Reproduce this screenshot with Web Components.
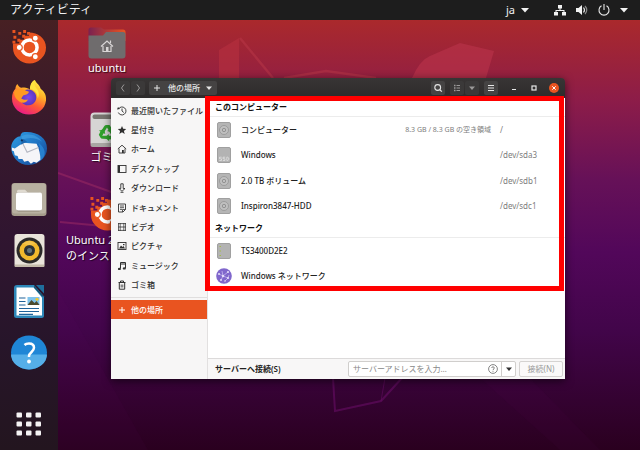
<!DOCTYPE html>
<html lang="ja">
<head>
<meta charset="utf-8">
<title>他の場所</title>
<style>
  html, body { margin: 0; height: 100%; }
  body { font-family: "Noto Sans", "Noto Sans CJK JP", sans-serif; background: #2c001e; overflow: hidden; }
</style>
</head>
<body>
<ubuntu-desktop></ubuntu-desktop>

<script>
const ICONS = {
  installer: ['0 0 36 36', `<path d="M18 3.500c9 0 17.500 6 17.500 15.500A17 16.500 0 0 1 1.500 19V15H8V11h5V7h5Z" fill="#e95420"/>
    <g fill="#e95420"><path d="M1 1h3v3H1zM7 3h3v3H7zM12 1h3v3h-3zM2 7h3v3H2zM6 10h3v3H6zM11 6h3v3h-3zM16 3h3v3h-3zM1 12h3v3H1z"/></g>
    <circle cx="18.500" cy="19" r="7.800" fill="none" stroke="#fff" stroke-width="3.600"/>
    <g fill="#fff" stroke="#e95420" stroke-width="1.200"><circle cx="8" cy="19" r="3.100"/><circle cx="24.500" cy="9.500" r="3.100"/><circle cx="24.500" cy="28.500" r="3.100"/></g>`],
  firefox: ['0 0 36 36', `<defs><linearGradient id="f1" x1=".8" y1="0" x2=".3" y2="1"><stop offset="0" stop-color="#fff04a"/><stop offset=".35" stop-color="#ffb428"/><stop offset=".65" stop-color="#ff5a35"/><stop offset="1" stop-color="#e8188a"/></linearGradient>
    <radialGradient id="f2"><stop offset="0" stop-color="#7a4bea"/><stop offset="1" stop-color="#5b36c0"/></radialGradient></defs>
    <path d="M24 0c2 4 5 5 6 9 4 3 6 7 5.500 12C34.500 30 27 35.500 18 35.500S.5 29 .5 19C.5 14 2 11 4 9c0-2 1-4 2-5 1 2 2 3 4 4 4-1 7 0 9 2 1-4 1-8 5-10Z" fill="url(#f1)"/>
    <path d="M10 13c4-5 12-4 14.500 1 3 6-1 12-7 12-7 0-10-6-7.500-13Z" fill="url(#f2)"/>
    <path d="M3 11c4-2 9-2 12 0l3 1c-1 3-4 3-6 4l-2 3c2 1 4 2 7 1-2 4-6 4-9 2-4-3-6-6-5-11Z" fill="#ff9a22"/>
    <path d="M19 9c5 1 8 5 8 10 2-4 1-8-1-10-2-3-3-4-2-9-4 2-5 6-5 9Z" fill="#ffe33f"/>`],
  thunderbird: ['0 0 38 36', `<defs><linearGradient id="t1" x1="0" y1="0" x2="1" y2="1"><stop offset="0" stop-color="#2f9fe4"/><stop offset=".5" stop-color="#1f74c4"/><stop offset="1" stop-color="#173f8c"/></linearGradient></defs>
    <path d="M12 1C26-1 38 6 38 18c0 9-8 17-19 17.500-6 0-10-2-13-5-5-5-8-14-4-20 2-3 4-5 8-5.500 0-2 1-3 2-4Z" fill="url(#t1)"/>
    <path d="M26 32c5-6 6-13 3-20 5 4 8 9 6 14-2 4-5 6-9 6Z" fill="#2b8ad8" opacity=".8"/>
    <path d="M11 5C19 1 28 4 33 11 26 6 18 6 12 9Z" fill="#4aa8e6" opacity=".55"/>
    <path d="m1 17 3 1 9-6 14 1q4 8 4 17l-4 3-3-1-3 2-3-3-4 1-2-3-4 0-1-3-3-1-1-4-2-1Z" fill="#f5f5f8"/>
    <path d="m12 12 5 10 12-5" fill="none" stroke="#b4b7c2" stroke-width="1.200"/>
    <path d="m10 14 3-6 4 3Z" fill="#1c66ae"/><circle cx="11.500" cy="9.500" r="1.200" fill="#12305a"/>`],
  files: ['0 0 36 34', `<rect x=".5" y=".5" width="35" height="33" rx="3" fill="#a59c8b"/><rect x="1" y="1" width="34" height="30" rx="3" fill="#b8b1a1"/>
    <path d="M6 28V9q0-2 2-2h6l3 3h11q2 0 2 2v15q0 2-2 2H8q-2 0-2-1Z" fill="#8d8576"/><path d="M6 27V8.500Q6 7 7.500 7H14l3 3H6Z" fill="#dfdad0"/><rect x="5" y="10" width="26" height="18" rx="2" fill="#fff"/>`],
  music_app: ['0 0 36 34', `<rect x="3.500" y=".5" width="30" height="33" rx="3" fill="#e9e4da"/><rect x="3.500" y="31" width="30" height="2.500" rx="1" fill="#c3bba9"/>
    <circle cx="18.500" cy="17" r="13" fill="#2b2a29"/><circle cx="18.500" cy="17" r="10" fill="#f2b92d"/><circle cx="18.500" cy="17" r="5.500" fill="#2b3136"/><circle cx="18.500" cy="17" r="2.500" fill="#61737b"/><path d="M11 10 18 7l7 3-6.500 2Z" fill="#fff" opacity=".15"/>`],
  writer: ['0 0 36 34', `<path d="M6 .5h17L33 12v19q0 2.500-2.500 2.500h-25Q3 33.500 3 31V3.500Q3 .5 6 .5Z" fill="#2d87b8"/><path d="M5.500 3h17L31 13v18H5.500Z" fill="#fff"/><path d="M25 .5h8V9Z" fill="#1f6f9c"/><path d="M23 1v2l8 9h2Z" fill="#17506f"/>
    <path d="M8 13.500h6.500M8 17h6.500M8 20.500h6.500M8 24h20M8 27h20M8 29.800h14" stroke="#1f639a" stroke-width="1.200"/><rect x="16.500" y="12.500" width="12" height="8" fill="#7ec3ec"/><path d="m16.500 20.500 4-5 3 3 2-2 3 4Z" fill="#4b4a2f"/><circle cx="26" cy="14.800" r="1.500" fill="#f2c82d"/>`],
  help_app: ['0 0 36 34', `<ellipse cx="18" cy="17" rx="18" ry="17" fill="#1f86d6"/><path d="M0 19h36A18 15 0 0 1 0 19Z" fill="#55aee8"/>
    <path d="M13.500 9.500q1.500-1.500 4.500-1.500 5 0 5 4.300c0 4-5 4.700-5 8.200v1" fill="none" stroke="#fff" stroke-width="2.500"/><circle cx="18" cy="26" r="1.900" fill="#fff"/>`],
  apps: ['0 0 36 34', `<g fill="#f5f3f4"><rect x="5.500" y="5" width="5.500" height="5" rx="1"/><rect x="15" y="5" width="5.500" height="5" rx="1"/><rect x="24.500" y="5" width="5.500" height="5" rx="1"/><rect x="5.500" y="14" width="5.500" height="5" rx="1"/><rect x="15" y="14" width="5.500" height="5" rx="1"/><rect x="24.500" y="14" width="5.500" height="5" rx="1"/><rect x="5.500" y="23" width="5.500" height="5" rx="1"/><rect x="15" y="23" width="5.500" height="5" rx="1"/><rect x="24.500" y="23" width="5.500" height="5" rx="1"/></g>`],
  home_folder: ['0 0 38 32', `<defs><linearGradient id="h1"><stop offset="0" stop-color="#7a2150"/><stop offset="1" stop-color="#e95420"/></linearGradient></defs>
    <path d="M.5 14V3Q.5 .5 3 .5h10l3 2h19q2.500 0 2.500 2.500v9Z" fill="url(#h1)"/><path d="M.5 28.500V8.500H15l3-3.500h17q2.500 0 2.500 2.500v21q0 3-3 3h-31q-3 0-3-3Z" fill="#6f6c6d"/>
    <path d="m13 19.500 6-5.500 6 5.500M15 19v5.500h8V19M22.500 16v-2.500" fill="none" stroke="#d9d6d6" stroke-width="1.200"/><rect x="18" y="20" width="2.500" height="4.500" fill="#d9d6d6"/>`],
  trash_desk: ['0 0 34 36', `<rect x=".5" y=".5" width="33" height="34" rx="4" fill="#d6d5d4"/><rect x="2.500" y="2.500" width="29" height="4.500" rx="2" fill="#77756f"/><rect x=".5" y="31" width="33" height="4" rx="2" fill="#a9a7a4"/>
    <g fill="#2fa02b"><path id="arm" d="m11.500 18.500 2.700-4.200q.8-1.300 2.300-1.300h3l2 3 1.500-1-1 5.500-5-1.500 1.500-1-1.500-2.500-2.700 4.500Z"/><use href="#arm" transform="rotate(120 17 21)"/><use href="#arm" transform="rotate(240 17 21)"/></g>`],
  network: ['0 0 12 12', `<path d="M4 1h4v3.500H4zM0 8h4v3.500H0zM8 8h4v3.500H8zM5.500 4h1v2.500h-1zM1.500 6h9v1h-9zM1.500 6h1v3h-1zM9.500 6h1v3h-1z" fill="#f2f2f2"/>`],
  volume: ['0 0 12 12', `<path d="M0 4h2.500L6 1v10L2.500 8H0Z" fill="#f2f2f2"/><path d="M7.500 3.500q2 2.500 0 5" fill="none" stroke="#e5e5e5" stroke-width="1.200"/><path d="M9 2q3.500 4 0 8" fill="none" stroke="#8a8a8a" stroke-width="1.200"/>`],
  power: ['0 0 12 12', `<path d="M3.500 1.800a5 5 0 1 0 5 0M6 0v6" fill="none" stroke="#e8e8e8" stroke-width="1.100"/>`],
  down: ['0 0 8 8', `<path d="M0 2h8L4 6.500Z" fill="currentColor"/>`],
  left: ['0 0 10 10', `<path d="M6 1.500 3.500 5 6 8.500" fill="none" stroke="currentColor"/>`],
  right: ['0 0 10 10', `<path d="M4 1.500 6.500 5 4 8.500" fill="none" stroke="currentColor"/>`],
  plus: ['0 0 10 10', `<path d="M5 2v6M2 5h6" stroke="currentColor" fill="none"/>`],
  search: ['0 0 10 10', `<circle cx="4.700" cy="4.500" r="2.900" fill="none" stroke="currentColor" stroke-width="1.100"/><path d="m6.800 6.600 2 2" stroke="currentColor" stroke-width="1.300"/>`],
  list: ['0 0 10 10', `<path d="M4.500 2.500H8M4.500 5H8M4.500 7.500H8" stroke="currentColor"/><path d="M2 1.700h1.500v1.500H2zM2 4.200h1.500v1.500H2zM2 6.700h1.500v1.500H2z" fill="currentColor"/>`],
  menu: ['0 0 10 10', `<path d="M2 2.500h6M2 5h6M2 7.500h6" stroke="currentColor"/>`],
  min: ['0 0 10 10', `<path d="M3 6.500h4" stroke="currentColor"/>`],
  max: ['0 0 10 10', `<rect x="3" y="3" width="4" height="4" fill="none" stroke="currentColor" stroke-width="1.200"/>`],
  close: ['0 0 10 10', `<circle cx="5" cy="5" r="5" fill="#e95420"/><path d="m3.300 3.300 3.400 3.400m0-3.400L3.300 6.700" stroke="#fff" stroke-width="1"/>`],
  recent: ['0 0 10 10', `<path d="M1.500 3A4 4 0 1 1 1.300 6.500" fill="none" stroke="currentColor" stroke-width=".9"/><path d="M0 3.500 1 1l2 2Z" fill="currentColor"/><path d="M5 2.500V5l1.800 1.500" fill="none" stroke="currentColor" stroke-width=".9"/>`],
  star: ['0 0 10 10', `<path d="m5 1 1.200 2.800 3 .2-2.300 1.900.8 3L5 7.300 2.300 8.900l.8-3L.8 4l3-.2Z" fill="#2f2f2f"/>`],
  home: ['0 0 10 10', `<path d="M.8 5 5 1.200 9.200 5M2 4.500V9h6V4.500" fill="none" stroke="currentColor" stroke-width=".9"/><path d="M5 6h1.800v3H5z" fill="currentColor"/>`],
  desktop: ['0 0 10 10', `<rect x="1" y="1.500" width="8" height="7" fill="none" stroke="currentColor" stroke-width=".9"/><path d="M1 1.500h2v7H1z" fill="currentColor"/>`],
  download: ['0 0 10 10', `<path d="M3.800.8h2.400v4.700H8L5 8.300 2 5.500h1.800ZM3.500 9.300h3" fill="none" stroke="currentColor" stroke-width=".9"/>`],
  document: ['0 0 10 10', `<path d="M1.500 1h7v5.500L6 9H1.500Z" fill="none" stroke="currentColor" stroke-width=".9"/><path d="M3 3h4M3 4.700h4M3 6.400h2M5.500 9V6.500h3" stroke="currentColor" stroke-width=".8" fill="none"/>`],
  video: ['0 0 10 10', `<path d="M1.500 1v8M8.500 1v8M3.200 1v8M6.800 1v8" stroke="currentColor" stroke-width=".7"/><path d="M1.200 1.600h7.600M1.200 5h7.600M1.200 8.400h7.600" stroke="currentColor" stroke-width=".8"/>`],
  picture: ['0 0 10 10', `<rect x="1" y="1.500" width="8" height="7" fill="none" stroke="currentColor" stroke-width=".9"/><path d="m2 7.500 2-3 1.500 1.500 1-1L8 7.500ZM6 3h1.500v1.300H6z" fill="currentColor"/>`],
  music: ['0 0 10 10', `<path d="M3.500 7.500v-6H8.500v5.500M3.500 3h5" fill="none" stroke="currentColor"/><ellipse cx="2.400" cy="7.900" rx="1.500" ry="1.200" fill="currentColor"/><ellipse cx="7.300" cy="7.400" rx="1.500" ry="1.200" fill="currentColor"/>`],
  trash: ['0 0 10 10', `<path d="M1.500 2.500h7M3.500 2.300V1h3v1.300M2.300 3v6.200h5.400V3" fill="none" stroke="currentColor"/><path d="M4.200 4.500v3M5.800 4.500v3" stroke="currentColor" stroke-width=".8"/>`],
  help: ['0 0 10 10', `<circle cx="5" cy="5" r="4.400" fill="none" stroke="currentColor" stroke-width=".9"/><path d="M3.700 4Q3.800 2.800 5 2.800T6.300 4C6.300 5 5 5 5 6.100M5 6.900v.9" fill="none" stroke="currentColor" stroke-width=".9"/>`],
  hdd: ['0 0 14 16', `<rect x=".5" y=".5" width="13" height="15" rx="1.500" fill="#b5b5b5" stroke="#a0a0a0"/><circle cx="7" cy="8" r="4.500" fill="#c0c0c0" stroke="#949494" stroke-width=".8"/><circle cx="7" cy="8" r="1.700" fill="none" stroke="#8c8c8c" stroke-width=".9"/>`],
  ssd: ['0 0 14 16', `<rect x=".5" y=".5" width="13" height="15" rx="1.500" fill="#b3b3b3" stroke="#a0a0a0"/><path d="M4.700 10.200H2.500v1.600h2v1.700H2.300M8.200 10.200H6v1.600h2v1.700H5.800M9.800 10.200v3.300h1l1-.9v-1.500l-1-.9Z" fill="none" stroke="#e8e8e8" stroke-width=".7"/>`],
  server: ['0 0 14 16', `<rect x=".5" y=".5" width="13" height="15" rx="1.500" fill="#b3b3b3" stroke="#a0a0a0"/><path d="M2.500 3.500h1.500M2.500 8h1.500M2.500 12.500h1.500" stroke="#a3bb4a"/>`],
  globe: ['0 0 16 16', `<circle cx="8" cy="8" r="7.800" fill="#8067cc"/><path d="m3 6 4 2 5-4M7 8l-2 4M7 8l5 2 1-3M12 10l-3 3M7 8 6 3" fill="none" stroke="#cfc3f2" stroke-width=".7"/><g fill="#e6defa"><circle cx="3" cy="6" r="1"/><circle cx="7" cy="8" r="1.200"/><circle cx="12" cy="4" r="1"/><circle cx="5" cy="12" r="1"/><circle cx="12" cy="10" r="1.100"/><circle cx="9" cy="13" r=".8"/></g>`]
};

function define(name, html, setup) {
  const template = document.createElement('template');
  template.innerHTML = html;
  customElements.define(name, class extends HTMLElement {
    constructor() {
      super();
      this.attachShadow({ mode: 'open' });
    }
    connectedCallback() {
      if (this.shadowRoot.childNodes.length) return;
      this.shadowRoot.append(template.content.cloneNode(true));
      if (setup) setup(this, this.shadowRoot);
    }
  });
}

define('ui-icon', `<style>
  :host { display: block; flex: none; width: var(--w, 10px); height: var(--h, 10px); }
  svg { display: block; width: 100%; height: 100%; }
</style>`, (host, root) => {
  const [box, body] = ICONS[host.getAttribute('name')];
  root.innerHTML += `<svg viewBox="${box}" aria-hidden="true">${body}</svg>`;
});

define('top-bar', `<style>
  :host { display: flex; align-items: center; justify-content: space-between; height: 20px; padding: 0 12px 0 10px; background: #1d1d1d; color: #f2f2f2; }
  button { all: unset; display: flex; align-items: center; font-size: 12px; line-height: 20px; }
  .lang { gap: 6px; font-size: 11px; }
  .right { display: flex; align-items: center; gap: 25px; }
  .status { gap: 10px; }
  ui-icon { --w: 12px; --h: 12px; }
  ui-icon[name=down] { --w: 8px; --h: 8px; }
</style>
<button>アクティビティ</button>
<div class="right">
  <button class="lang">ja <ui-icon name="down"></ui-icon></button>
  <button class="status" aria-label="システム"><ui-icon name="network"></ui-icon><ui-icon name="volume"></ui-icon><ui-icon name="power"></ui-icon><ui-icon name="down"></ui-icon></button>
</div>`);

define('dock-item', `<style>
  :host { display: block; }
  button { all: unset; display: block; }
  ui-icon { --w: 36px; --h: 35px; }
</style><button></button>`, (host, root) => {
  const button = root.querySelector('button');
  button.innerHTML = `<ui-icon name="${host.getAttribute('icon')}"></ui-icon>`;
  button.setAttribute('aria-label', host.getAttribute('label'));
});

define('app-dock', `<style>
  :host { display: flex; flex-direction: column; align-items: center; gap: 16px; box-sizing: border-box; width: 58px; padding: 9px 0 8px; background: linear-gradient(#472023, #38192c 25%, #301530 50%, #27152a 75%, #23151f); }
  .apps { margin-top: auto; }
</style>
<dock-item icon="installer" label="インストーラー"></dock-item>
<dock-item icon="firefox" label="Firefox"></dock-item>
<dock-item icon="thunderbird" label="Thunderbird"></dock-item>
<dock-item icon="files" label="ファイル"></dock-item>
<dock-item icon="music_app" label="Rhythmbox"></dock-item>
<dock-item icon="writer" label="Writer"></dock-item>
<dock-item icon="help_app" label="ヘルプ"></dock-item>
<dock-item class="apps" icon="apps" label="アプリケーションを表示する"></dock-item>`);

define('wall-paper', `<style>
  :host { display: block; background: linear-gradient(#aa292c, #8c1c49 19%, #661158 37%, #52075a 54%, #42054a 72%, #2a001f); }
  svg { display: block; width: 100%; height: 100%; }
</style>
<svg viewBox="58 20 582 430" preserveAspectRatio="xMidYMid slice" aria-hidden="true">
  <path d="M219 78V50l20-12v40Z" fill="#b83040" opacity=".6"/>
  <path d="m240 38 33 40M284 78l42-7 50 7" fill="none" stroke="#b93748" stroke-width="2.500" opacity=".5"/>
  <path d="M412 78q8-18 18-22l30-13 34 8-8 27Z" fill="#b83349" opacity=".65"/>
  <path d="m58 173 56 20M60 222l54 5" stroke="#a02c63" stroke-width="2" opacity=".5"/>
  <path d="m333 378 2 33 46-10 21-23" fill="none" stroke="#6b0e69" stroke-width="2" opacity=".55"/>
  <path d="m385 378-4 23" stroke="#6b0e69" opacity=".5"/>
  <path d="m58 290 90 160H58ZM480 378l80 72h40l-70-72Z" fill="#70106c" opacity=".05"/>
</svg>`);

define('desk-icon', `<style>
  :host { display: flex; flex-direction: column; align-items: center; gap: 1px; box-sizing: border-box; width: 98px; color: #fff; font-size: 11px; line-height: 16px; text-align: center; white-space: nowrap; text-shadow: 1px 1px 1px #000a; }
  :host([clipped]) span { align-self: start; padding-left: 8px; text-align: left; }
</style><slot name="icon"></slot><span><slot></slot></span>`);

define('nav-item', `<style>
  :host { display: grid; }
  button { all: unset; display: flex; align-items: center; gap: 4px; padding-left: 6px; font-size: 8px; line-height: 12px; font-weight: 500; color: #303030; white-space: nowrap; }
  :host([selected]) button { background: #e95420; color: #fff; }
</style><button></button>`, (host, root) => {
  root.querySelector('button').innerHTML = `<ui-icon name="${host.getAttribute('icon')}"></ui-icon><slot></slot>`;
});

define('side-bar', `<style>
  :host { display: block; padding-top: 3px; background: #f7f6f6; border-right: 1px solid #e2e0e0; }
  .list { display: grid; grid-auto-rows: 1fr; height: 194px; }
  .other { display: grid; grid-template-rows: 19px; margin-top: 2px; padding-top: 2px; border-top: 1px solid #e0dede; }
</style>
<nav>
<div class="list">
<nav-item icon="recent">最近開いたファイル</nav-item>
<nav-item icon="star">星付き</nav-item>
<nav-item icon="home">ホーム</nav-item>
<nav-item icon="desktop">デスクトップ</nav-item>
<nav-item icon="download">ダウンロード</nav-item>
<nav-item icon="document">ドキュメント</nav-item>
<nav-item icon="video">ビデオ</nav-item>
<nav-item icon="picture">ピクチャ</nav-item>
<nav-item icon="music">ミュージック</nav-item>
<nav-item icon="trash">ゴミ箱</nav-item>
</div>
<div class="other"><nav-item icon="plus" selected>他の場所</nav-item></div>
</nav>`);

define('header-bar', `<style>
  :host { display: flex; align-items: center; height: 20px; padding: 0 4px 0 5px; background: linear-gradient(#383535, #2d2b2b); border-radius: 4px 4px 0 0; color: #e6e6e6; }
  button { all: unset; display: flex; align-items: center; justify-content: center; box-sizing: border-box; min-width: 14px; height: 14px; border-radius: 2px; background: #454343; font-size: 8px; line-height: 12px; font-weight: 500; }
  .pair { display: flex; gap: 1px; color: #9b9999; }
  .pair button { background: #3b3939; }
  .path { gap: 6px; margin-left: 4px; padding: 0 5px 0 3px; }
  .tools { display: flex; gap: 5px; margin-left: auto; }
  .wm { display: flex; gap: 6px; margin-left: 9px; }
  .wm button { background: none; }
  .path ui-icon[name=down], .pair ui-icon[name=down] { --w: 6px; --h: 6px; }
</style>
<div class="pair"><button aria-label="戻る"><ui-icon name="left"></ui-icon></button><button aria-label="進む"><ui-icon name="right"></ui-icon></button></div>
<button class="path"><ui-icon name="plus"></ui-icon>他の場所<ui-icon name="down"></ui-icon></button>
<div class="tools">
  <button aria-label="検索"><ui-icon name="search"></ui-icon></button>
  <div class="pair"><button aria-label="表示形式"><ui-icon name="list"></ui-icon></button><button aria-label="表示設定"><ui-icon name="down"></ui-icon></button></div>
  <button aria-label="メニュー"><ui-icon name="menu"></ui-icon></button>
</div>
<div class="wm"><button aria-label="最小化"><ui-icon name="min"></ui-icon></button><button aria-label="最大化"><ui-icon name="max"></ui-icon></button><button aria-label="閉じる"><ui-icon name="close"></ui-icon></button></div>`);

define('place-row', `<style>
  :host { display: flex; align-items: center; padding-left: 8px; font-size: 8px; line-height: 12px; color: #222; white-space: nowrap; }
  .icon { display: grid; place-items: center; width: 16px; margin-right: 9px; --w: 14px; --h: 16px; }
  .globe { --w: 16px; }
  .name { flex: 1; font-weight: 500; }
  .free, .mount { color: #7d7d7d; }
  .free { font-size: 7px; padding-right: 9px; }
  .mount { width: 65px; }
</style><span class="icon"></span><span class="name"><slot></slot></span><span class="free"><slot name="free"></slot></span><span class="mount"><slot name="mount"></slot></span>`, (host, root) => {
  const box = root.querySelector('.icon'), name = host.getAttribute('icon');
  box.classList.add(name);
  box.innerHTML = `<ui-icon name="${name}"></ui-icon>`;
});

define('place-group', `<style>
  :host { display: block; }
  h2 { margin: 0; padding-left: 7px; font-size: 8px; line-height: 18px; font-weight: 700; color: #111; border-bottom: 1px solid #ececec; }
  .rows { display: grid; grid-auto-rows: 1fr; height: var(--rows); }
</style><h2><slot name="title"></slot></h2><div class="rows"><slot></slot></div>`);

define('highlight-frame', `<style>
  :host { display: block; position: relative; }
  .frame { position: absolute; inset: -2px 1px -2px -3px; border: 5px solid #f00; pointer-events: none; }
</style><slot></slot><div class="frame"></div>`);

define('connect-bar', `<style>
  :host { display: flex; align-items: center; height: 20px; padding: 0 2px 0 7px; border-top: 1px solid #dcdada; background: #f8f7f7; font-size: 8px; line-height: 12px; color: #222; }
  label { flex: 1; font-weight: 600; }
  .field { display: flex; align-items: center; box-sizing: border-box; height: 16px; width: 168px; border: 1px solid #d0cecc; border-radius: 2px; background: #fff; color: #777; }
  input { all: unset; flex: 1; min-width: 0; padding-left: 4px; font: inherit; }
  input::placeholder { color: #888; opacity: 1; }
  button { all: unset; display: grid; place-items: center; box-sizing: border-box; }
  .drop { width: 14px; height: 14px; margin-left: 3px; border-left: 1px solid #d0cecc; color: #333; }
  .drop ui-icon { --w: 6px; --h: 6px; }
  .go { height: 16px; width: 44px; margin-left: 3px; border: 1px solid #d5d3d1; border-radius: 2px; color: #999; background: #faf9f9; }
</style>
<label for="addr">サーバーへ接続(S)</label>
<div class="field"><input id="addr" type="text" placeholder="サーバーアドレスを入力…"><button aria-label="ヘルプ"><ui-icon name="help"></ui-icon></button><button class="drop" aria-label="履歴"><ui-icon name="down"></ui-icon></button></div>
<button class="go">接続(N)</button>`);

define('files-window', `<style>
  :host { display: block; border-radius: 4px 4px 0 0; box-shadow: 0 2px 8px #0009; }
  .body { display: grid; grid-template-columns: 97px 1fr; }
  .pane { display: flex; flex-direction: column; min-height: 281px; background: #fff; }
  .local { --rows: 102px; }
  .net { --rows: 51px; }
  connect-bar { margin-top: auto; }
</style>
<header-bar></header-bar>
<div class="body">
  <side-bar></side-bar>
  <div class="pane">
    <highlight-frame>
      <place-group class="local"><span slot="title">このコンピューター</span>
        <place-row icon="hdd">コンピューター<span slot="free">8.3 GB / 8.3 GB の空き領域</span><span slot="mount">/</span></place-row>
        <place-row icon="ssd">Windows<span slot="mount">/dev/sda3</span></place-row>
        <place-row icon="hdd">2.0 TB ボリューム<span slot="mount">/dev/sdb1</span></place-row>
        <place-row icon="hdd">Inspiron3847-HDD<span slot="mount">/dev/sdc1</span></place-row>
      </place-group>
      <place-group class="net"><span slot="title">ネットワーク</span>
        <place-row icon="server">TS3400D2E2</place-row>
        <place-row icon="globe">Windows ネットワーク</place-row>
      </place-group>
    </highlight-frame>
    <connect-bar></connect-bar>
  </div>
</div>`);

define('ubuntu-desktop', `<style>
  :host { display: grid; grid-template-rows: auto 1fr; height: 100vh; }
  .work { display: grid; grid-template-columns: auto 1fr; min-height: 0; }
  .stage { display: grid; position: relative; min-width: 0; overflow: hidden; }
  wall-paper { position: absolute; inset: 0; }
  desk-icon { position: absolute; left: 0; }
  .home { top: 7px; }
  .bin { top: 92px; }
  .setup { top: 176px; }
  .home ui-icon { --w: 38px; --h: 32px; }
  .bin ui-icon { --w: 34px; --h: 36px; }
  .setup ui-icon { --w: 36px; --h: 35px; }
  files-window { position: absolute; left: 53px; right: 75px; top: 58px; }
</style>
<top-bar></top-bar>
<div class="work">
  <app-dock></app-dock>
  <main class="stage">
    <wall-paper></wall-paper>
    <desk-icon class="home"><ui-icon slot="icon" name="home_folder"></ui-icon>ubuntu</desk-icon>
    <desk-icon class="bin"><ui-icon slot="icon" name="trash_desk"></ui-icon>ゴミ箱</desk-icon>
    <desk-icon class="setup" clipped><ui-icon slot="icon" name="installer"></ui-icon>Ubuntu 2<br>のインス</desk-icon>
    <files-window></files-window>
  </main>
</div>`);
</script>
</body>
</html>
